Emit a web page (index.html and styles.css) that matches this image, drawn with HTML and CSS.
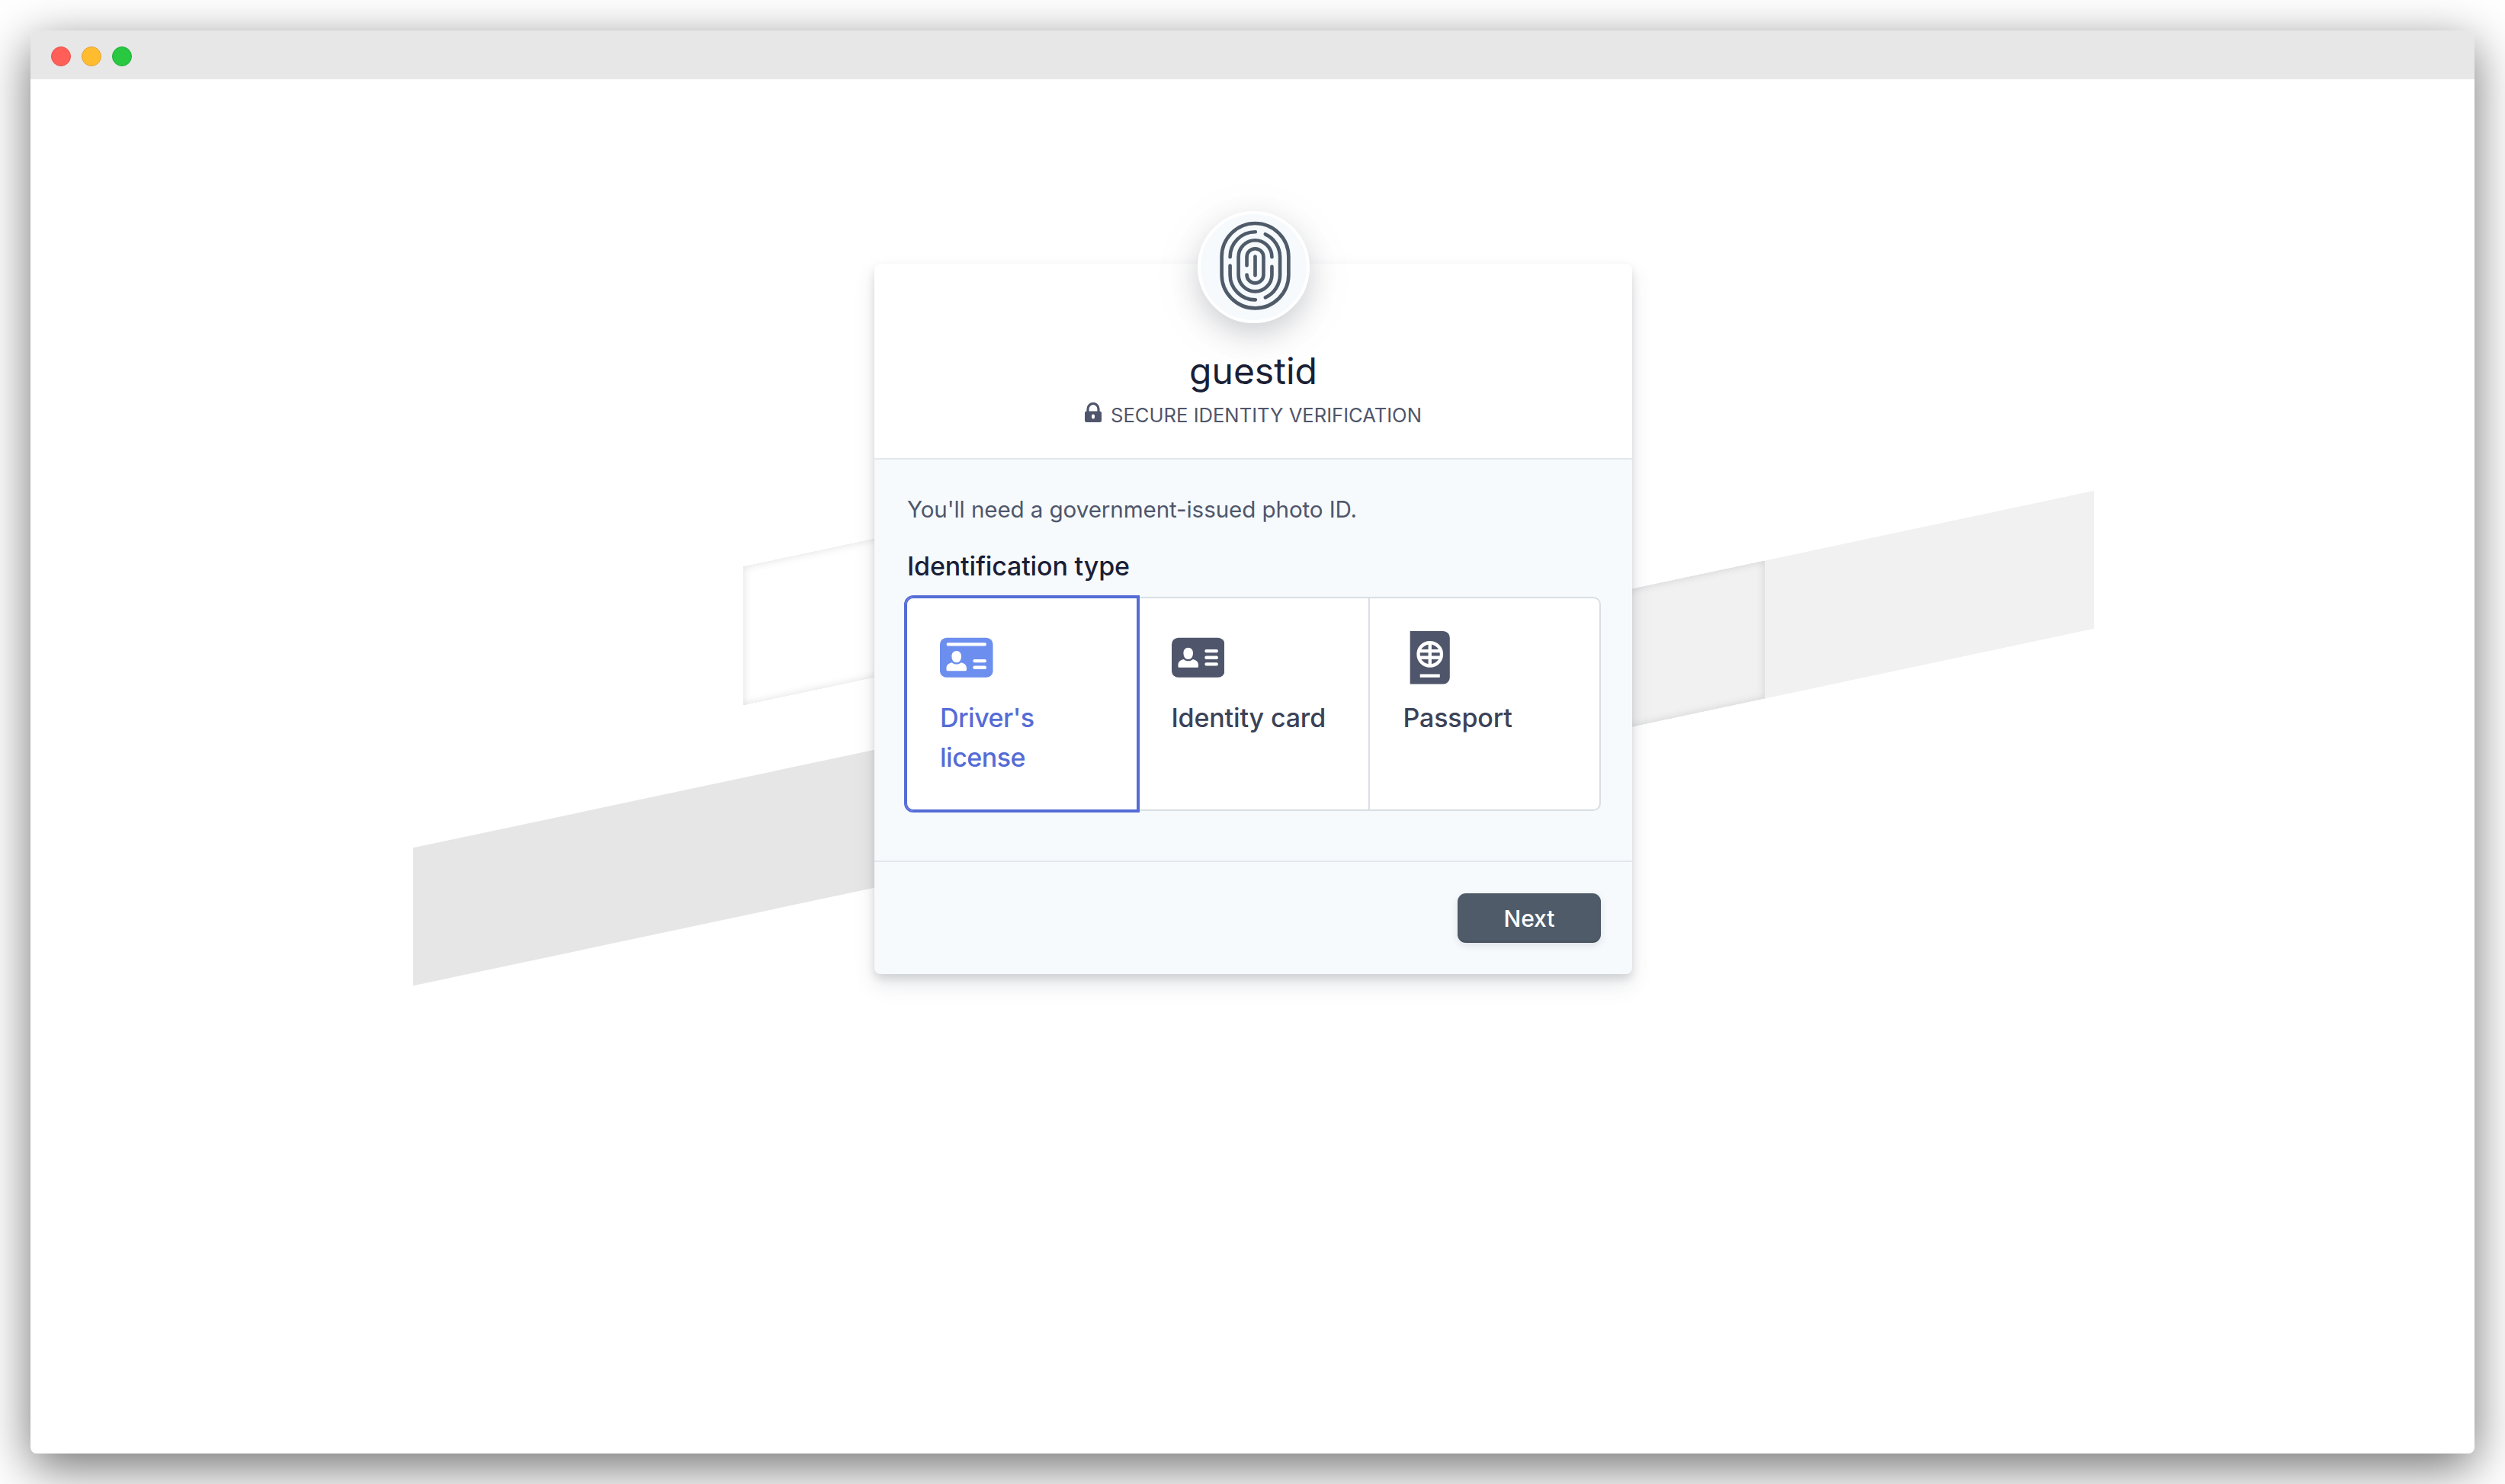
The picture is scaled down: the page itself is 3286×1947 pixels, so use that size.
FILE: index.html
```
<!DOCTYPE html>
<html lang="en">
<head>
  <meta charset="UTF-8" />
  <meta name="viewport" content="width=device-width, initial-scale=1.0"/>
  <title>guestid</title>
  <link rel="stylesheet" href="styles.css">
</head>
<body>
  <div class="window">
    <div class="titlebar">
      <span class="dot dot-red"></span>
      <span class="dot dot-yellow"></span>
      <span class="dot dot-green"></span>
    </div>
    <div class="stage">
      <div class="stripes">
        <div class="stripe-outline"></div>
        <div class="stripe-dark"></div>
        <div class="stripe-light"></div>
        <div class="stripe-inset"></div>
      </div>

      <div class="card">
        <div class="card-header">
          <div class="logo">
            <svg class="logo-icon" viewBox="180 118 278 352">
              <rect x="187" y="127" width="264" height="335" rx="132"/>
              <path d="M220 260A99 99 0 0 1 319 161h1"/>
              <path d="M359 170A99 99 0 0 1 417 260V330A99 99 0 0 1 359 420"/>
              <path d="M220 294V330A99 99 0 0 0 319 429h1"/>
              <path d="M385 260A66 66 0 0 0 253 260V330A66 66 0 0 0 385 330V298"/>
              <path d="M286 293V260A33 33 0 0 1 352 260V330A33 33 0 0 1 286 330"/>
              <path d="M319 258V332"/>
            </svg>
          </div>
          <h1 class="brand">guestid</h1>
          <p class="tagline">
            <svg class="lock-icon" viewBox="0 0 22 26">
              <path fill="none" stroke="currentColor" stroke-width="3.2" d="M4 13V8.5a7 7 0 0 1 14 0V13"/>
              <path fill="currentColor" fill-rule="evenodd" d="M2.5 11.5h17A2.5 2.5 0 0 1 22 14v9.5a2.5 2.5 0 0 1-2.5 2.5h-17A2.5 2.5 0 0 1 0 23.500V14a2.500 2.500 0 0 1 2.500-2.500zM11 15.500a2 2 0 0 0-2 2v2a2 2 0 0 0 4 0v-2a2 2 0 0 0-2-2z"/>
            </svg>
            <span>SECURE IDENTITY VERIFICATION</span>
          </p>
        </div>

        <div class="card-body">
          <p class="hint">You'll need a government-issued photo ID.</p>
          <h2 class="label">Identification type</h2>
          <div class="options">
            <div class="option selected">
              <svg class="option-icon" viewBox="0 0 16 16">
                <rect fill="currentColor" y="2" width="16" height="12" rx="2"/>
                <rect fill="#fff" x="2" y="3.5" width="12" height="1" rx=".4"/>
                <rect fill="#fff" x="10" y="8.5" width="4" height="1" rx=".4"/>
                <rect fill="#fff" x="10" y="10.5" width="4" height="1" rx=".4"/>
                <path fill="#fff" d="M5 6c.9 0 1.450.7 1.450 1.600C6.450 8.700 5.900 9.500 5 9.500s-1.450-.8-1.450-1.900C3.550 6.700 4.100 6 5 6zM3.600 9.500c.8.700 2 .7 2.800 0 1 .2 1.650.8 1.650 1.700V11.700a.3.300 0 0 1-.3.300h-5.500a.3.300 0 0 1-.3-.3v-.5c0-.9.650-1.500 1.650-1.700z"/>
              </svg>
              <span>Driver's license</span>
            </div>
            <div class="option">
              <svg class="option-icon" viewBox="0 0 16 16">
                <rect fill="currentColor" y="2" width="16" height="12" rx="2"/>
                <rect fill="#fff" x="10" y="5.5" width="4" height="1" rx=".4"/>
                <rect fill="#fff" x="10" y="7.5" width="4" height="1" rx=".4"/>
                <rect fill="#fff" x="10" y="9.5" width="4" height="1" rx=".4"/>
                <path fill="#fff" d="M5 5c.9 0 1.450.7 1.450 1.600C6.450 7.700 5.900 8.500 5 8.500s-1.450-.8-1.450-1.900C3.550 5.700 4.100 5 5 5zM3.600 8.500c.8.700 2 .7 2.800 0 1 .2 1.650.8 1.650 1.700V10.700a.3.300 0 0 1-.3.300h-5.500a.3.300 0 0 1-.3-.3v-.5c0-.9.650-1.500 1.650-1.700z"/>
              </svg>
              <span>Identity card</span>
            </div>
            <div class="option">
              <svg class="option-icon" viewBox="0 0 16 16">
                <path fill="currentColor" d="M2 0h10a2 2 0 0 1 2 2v12a2 2 0 0 1-2 2H2z"/>
                <circle fill="none" stroke="#fff" cx="8" cy="7" r="3.5"/>
                <path fill="none" stroke="#fff" d="M8 3.500v7M4.900 6h6.200M4.900 8h6.200M5 13.500h6"/>
              </svg>
              <span>Passport</span>
            </div>
          </div>
        </div>

        <div class="card-footer">
          <button type="button" class="btn">Next</button>
        </div>
      </div>
    </div>
  </div>
</body>
</html>
```
FILE: styles.css
```
* {
    margin: 0;
    padding: 0;
    box-sizing: border-box;
}
body {
    font-family: Inter, 'Liberation Sans', sans-serif;
    background: #fff;
    height: 1947px;
    padding: 40px;
    overflow: hidden;
}
.window {
    height: 1867px;
    background: #fff;
    border-radius: 8px;
    box-shadow: 0 18px 64px rgba(0, 0, 0, 0.56);
}
.titlebar {
    display: flex;
    align-items: center;
    gap: 15px;
    height: 64px;
    padding: 4px 0 0 27px;
    background: #e7e7e7;
    border-radius: 8px 8px 0 0;
}
.dot {
    width: 26px;
    height: 26px;
    margin-right: -1px;
    border-radius: 50%;
    border: 1px solid;
}
.dot-red { background: #ff5f57; border-color: #e8504a; }
.dot-yellow { background: #febc2e; border-color: #e5a33a; }
.dot-green { background: #28c840; border-color: #1fae3c; }

/* stripes and card share one grid cell */
.stage {
    display: grid;
    justify-items: center;
    align-items: start;
    padding-left: 2px;
}
.stripes {
    grid-area: 1 / 1;
    display: grid;
    grid-template-columns: 432.5px 432.5px 475px 432.5px 432.5px;
    grid-template-rows: 181.5px 181.5px;
    row-gap: 95px;
    margin-top: 496.5px;
    transform: skewY(-12deg);
    transform-origin: 50% 0;
}
.stripe-outline {
    grid-area: 1 / 2;
    box-shadow: inset 0 0 12px rgba(0, 0, 0, 0.13);
}
.stripe-dark {
    grid-area: 2 / 1 / 3 / 3;
    background: #e6e6e6;
}
.stripe-light {
    grid-area: 2 / 4 / 3 / 6;
    background: #f1f1f1;
}
.stripe-inset {
    grid-area: 2 / 4;
    box-shadow: inset 0 0 12px rgba(0, 0, 0, 0.13);
}

.card {
    grid-area: 1 / 1;
    position: relative;
    width: 994px;
    height: 932px;
    margin-top: 242px;
    display: flex;
    flex-direction: column;
    background: #f6fafd;
    border-radius: 8px;
    box-shadow: 0 14px 28px rgba(60, 66, 87, 0.12), 0 6px 12px rgba(0, 0, 0, 0.12);
}
.card-header {
    display: flex;
    flex-direction: column;
    align-items: center;
    height: 257px;
    background: #fff;
    border-bottom: 2px solid #e3e8ee;
    border-radius: 8px 8px 0 0;
}
.logo {
    display: flex;
    align-items: center;
    justify-content: center;
    width: 147px;
    height: 147px;
    margin-top: -69px;
    background: #f6fafd;
    border: 4px solid #fff;
    border-radius: 50%;
    box-shadow: 0 14px 80px rgba(0, 0, 0, 0.06), 0 14px 36px rgba(60, 66, 87, 0.2);
}
.logo-icon {
    width: 93px;
    height: 117px;
    margin: -4px 0 0 4px;
    fill: none;
    stroke: #4f5b69;
    stroke-width: 14;
    stroke-linecap: round;
}
.brand {
    margin-top: 33px;
    font-size: 48px;
    font-weight: 400;
    line-height: 60px;
    color: #1a1f36;
}
.tagline {
    display: flex;
    align-items: center;
    gap: 12px;
    margin-top: 12px;
    font-size: 25.6px;
    line-height: 32px;
    color: #4f566b;
}
.lock-icon {
    width: 22px;
    height: 26px;
    margin-top: -8px;
}

.card-body {
    height: 526px;
    padding: 42px 41px 0;
}
.hint {
    margin-left: 2px;
    font-size: 29.6px;
    line-height: 47px;
    letter-spacing: -0.1px;
    color: #4f566b;
}
.label {
    margin: 27px 0 0 2px;
    font-size: 34px;
    font-weight: 500;
    line-height: 48px;
    letter-spacing: -0.15px;
    color: #1a1f36;
}
.options {
    display: grid;
    grid-template-columns: 305px 304px 303px;
    height: 281px;
    margin-top: 16px;
}
.option {
    padding: 43px 43px 0 43.5px;
    background: #fff;
    border: 2px solid #d8dee4;
    border-left-width: 0;
    font-size: 34px;
    font-weight: 500;
    line-height: 52px;
    letter-spacing: -0.15px;
    color: #3c4257;
}
.option:last-child {
    border-radius: 0 10px 10px 0;
}
.option.selected {
    padding: 45px 45px 0;
    border: 0;
    border-radius: 10px 0 0 10px;
    box-shadow: 0 0 0 2px #556cd6, inset 0 0 0 2px #556cd6;
    letter-spacing: -0.5px;
    color: #556cd6;
    z-index: 1;
}
.option-icon {
    display: block;
    width: 69.5px;
    height: 69.5px;
    margin-bottom: 18.5px;
    color: #4f566b;
}
.selected .option-icon {
    color: #6c8eef;
}

.card-footer {
    display: flex;
    justify-content: flex-end;
    padding: 41px 41px 0;
    flex: 1;
    border-top: 2px solid #e3e8ee;
}
.btn {
    width: 188px;
    height: 65px;
    background: #4f5b69;
    border: none;
    border-radius: 11px;
    box-shadow: 0 4px 10px rgba(60, 66, 87, 0.12), inset 0 -2px 2px rgba(0, 0, 0, 0.12);
    font-family: inherit;
    font-size: 30px;
    font-weight: 500;
    color: #fff;
}
```
